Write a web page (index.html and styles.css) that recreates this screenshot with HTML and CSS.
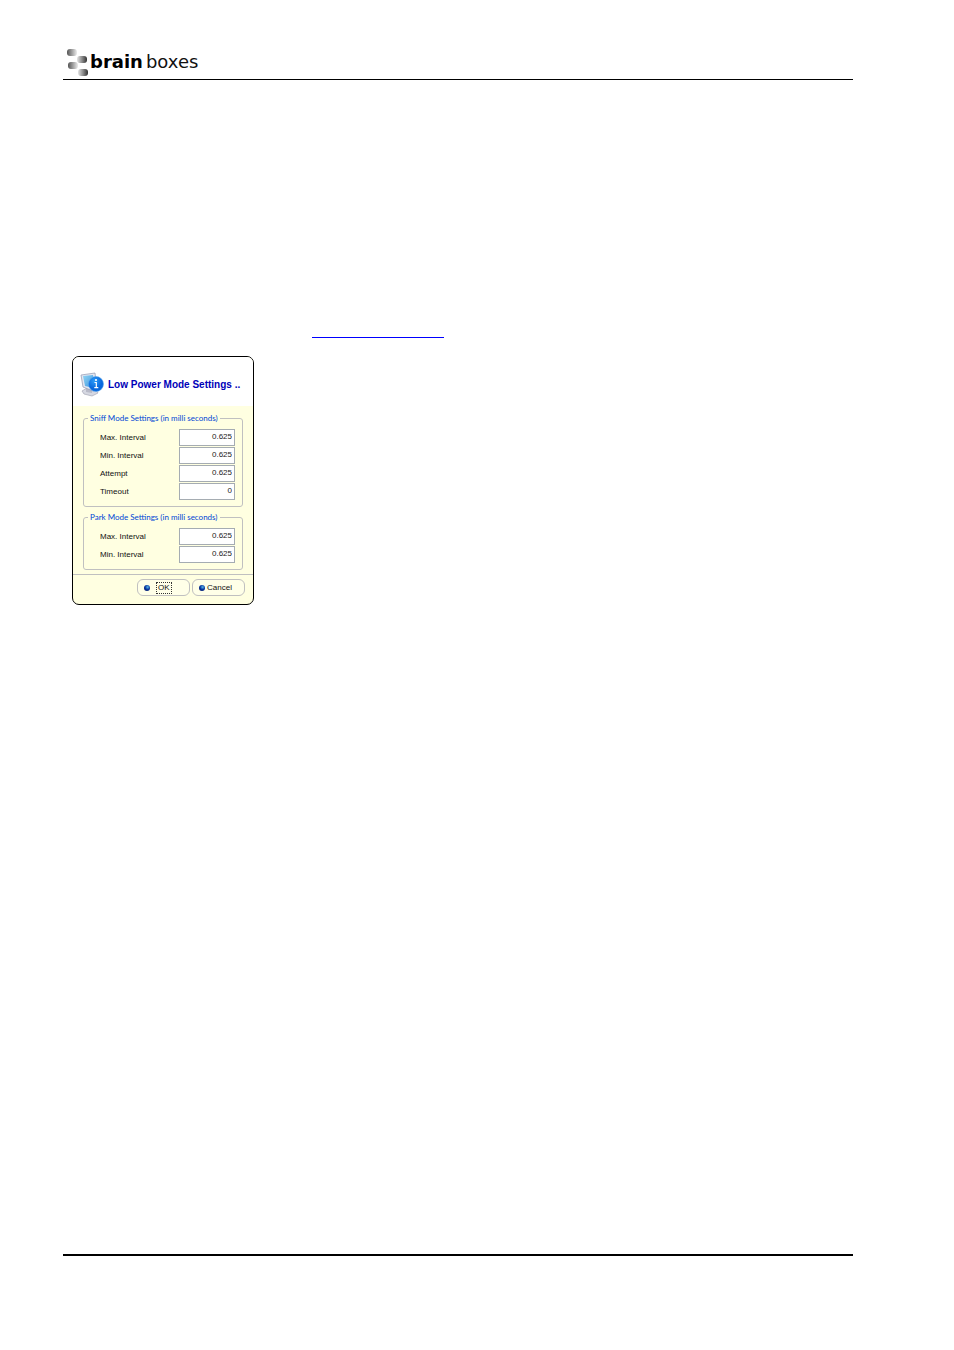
FILE: index.html
```
<!DOCTYPE html>
<html lang="en">
<head>
    <meta charset="UTF-8">
    <meta name="viewport" content="width=device-width, initial-scale=1.0">
    <title>Low Power Mode Settings</title>
    <link rel="stylesheet" href="styles.css">
</head>
<body>
    <div class="page">
        <header class="page-header">
            <svg class="logo-mark" viewBox="0 0 24 30" aria-hidden="true">
                <defs>
                    <linearGradient id="fadeRight">
                        <stop offset="0" stop-color="#555"/>
                        <stop offset="1" stop-color="#ececec"/>
                    </linearGradient>
                    <linearGradient id="fadeLeft">
                        <stop offset="0" stop-color="#e4e4e4"/>
                        <stop offset="1" stop-color="#333"/>
                    </linearGradient>
                </defs>
                <rect x="2" y="2" width="10" height="7" rx="3" fill="url(#fadeRight)"/>
                <rect x="12" y="9" width="10" height="7" rx="3" fill="url(#fadeLeft)"/>
                <rect x="3" y="15" width="10" height="7" rx="3" fill="url(#fadeRight)"/>
                <rect x="13" y="22" width="10" height="7" rx="3" fill="url(#fadeLeft)"/>
            </svg>
            <span class="logo-text"><b>brain</b>boxes</span>
        </header>
        <main>
            <div class="link-line"></div>
            <form class="dialog">
                <div class="dialog-header">
                    <svg class="dialog-icon" viewBox="0 0 24 26" aria-hidden="true">
                        <defs>
                            <linearGradient id="screen" x2="1" y2="1">
                                <stop offset="0" stop-color="#8fd4f4"/>
                                <stop offset="1" stop-color="#3c94dc"/>
                            </linearGradient>
                            <radialGradient id="ball" cx=".4" cy=".3">
                                <stop offset="0" stop-color="#2c9cf8"/>
                                <stop offset="1" stop-color="#0867dc"/>
                            </radialGradient>
                        </defs>
                        <path d="M2 19l5-3 9 2 2 3-6 3-8-2z" fill="#d6d8e2" stroke="#a6a8b6" stroke-width=".7"/>
                        <path d="M6 16l6 1v4l-6-1z" fill="#b8bac8"/>
                        <path d="M1 3l14-2 2 16-4 2L3 15z" fill="#e4e6f0" stroke="#8f98b0" stroke-width=".7"/>
                        <path d="M3 4l10-1 1 13-9-2z" fill="url(#screen)"/>
                        <circle cx="16" cy="12" r="7.5" fill="url(#ball)" stroke="#5ba7ee" stroke-width=".6"/>
                        <circle cx="16" cy="8" r="1.1" fill="#fff"/>
                        <path d="M14.5 10.5h1.8v5M14.3 15.7h4" stroke="#fff" stroke-width="1.2" fill="none"/>
                    </svg>
                    <h1>Low Power Mode Settings ..</h1>
                </div>
                <div class="dialog-body">
                    <fieldset>
                        <legend>Sniff Mode Settings (in milli seconds)</legend>
                        <div class="row">
                            <label for="sniffMax">Max. Interval</label>
                            <input type="text" id="sniffMax" value="0.625">
                        </div>
                        <div class="row">
                            <label for="sniffMin">Min. Interval</label>
                            <input type="text" id="sniffMin" value="0.625">
                        </div>
                        <div class="row">
                            <label for="attempt">Attempt</label>
                            <input type="text" id="attempt" value="0.625">
                        </div>
                        <div class="row">
                            <label for="timeout">Timeout</label>
                            <input type="text" id="timeout" value="0">
                        </div>
                    </fieldset>
                    <fieldset>
                        <legend>Park Mode Settings (in milli seconds)</legend>
                        <div class="row">
                            <label for="parkMax">Max. Interval</label>
                            <input type="text" id="parkMax" value="0.625">
                        </div>
                        <div class="row">
                            <label for="parkMin">Min. Interval</label>
                            <input type="text" id="parkMin" value="0.625">
                        </div>
                    </fieldset>
                </div>
                <div class="dialog-buttons">
                    <button type="submit" class="ok"><span class="dot"></span><span class="focus">OK</span></button>
                    <button type="button"><span class="dot"></span>Cancel</button>
                </div>
            </form>
        </main>
        <footer class="page-footer"></footer>
    </div>
</body>
</html>
```
FILE: styles.css
```
* {
    box-sizing: border-box;
}
body {
    margin: 0;
    background-color: #fff;
    font-family: "Liberation Sans", Arial, sans-serif;
}
.page {
    display: flex;
    flex-direction: column;
    min-height: 100vh;
    padding: 46px 101px 94px 63px;
}
.page-header {
    display: flex;
    align-items: center;
    gap: 1px;
    height: 34px;
    padding: 0 2px 2px;
    border-bottom: 1px solid #000;
}
.logo-mark {
    width: 24px;
    height: 30px;
}
.logo-text {
    font-family: "DejaVu Sans", Verdana, sans-serif;
    font-size: 18px;
    line-height: 20px;
    color: #111;
}
.logo-text b {
    margin-right: 3px;
    color: #000;
}
main {
    flex: 1;
    padding: 257px 9px 0;
}
.link-line {
    width: 132px;
    margin: 0 0 18px 240px;
    border-bottom: 1px solid #00f;
}
.dialog {
    width: 182px;
    border: 1px solid #000;
    border-radius: 7px;
    background-color: #ffffe1;
    overflow: hidden;
    font-size: 8px;
    line-height: 10px;
    color: #111;
}
.dialog-header {
    display: flex;
    align-items: center;
    gap: 4px;
    height: 49px;
    padding: 6px 8px 0 7px;
    background-color: #fff;
}
.dialog-icon {
    flex: none;
    width: 24px;
    height: 26px;
}
h1 {
    margin: 0;
    font-size: 10px;
    line-height: 12px;
    white-space: nowrap;
    color: #0000b8;
}
.dialog-body {
    display: flex;
    flex-direction: column;
    gap: 5px;
    padding: 7px 10px 4px;
}
fieldset {
    display: flex;
    flex-direction: column;
    gap: 1px;
    min-width: 0;
    margin: 0;
    padding: 6px 7px 6px 16px;
    border: 1px solid #c0c0c0;
    border-radius: 3px;
}
legend {
    margin-left: -12px;
    padding: 0 2px;
    font-family: Lato, "Liberation Sans", sans-serif;
    white-space: nowrap;
    color: #0046d5;
}
.row {
    display: flex;
    justify-content: space-between;
    align-items: center;
}
input {
    width: 56px;
    height: 17px;
    padding: 0 2px 2px;
    border: 1px solid #a5acb2;
    background-color: #fff;
    font: inherit;
    text-align: right;
    color: #222;
}
.dialog-buttons {
    display: flex;
    justify-content: flex-end;
    gap: 2px;
    padding: 4px 8px 8px;
    border-top: 1px solid #c0c0c0;
}
button {
    display: flex;
    align-items: center;
    gap: 2px;
    width: 53px;
    height: 17px;
    padding: 0 6px;
    border: 1px solid #c0c0c0;
    border-radius: 6px;
    background-color: #ffffe8;
    font: inherit;
    color: #111;
}
.ok {
    gap: 6px;
}
.dot {
    width: 6px;
    height: 6px;
    border-radius: 50%;
    background: radial-gradient(circle at 60% 35%, #58b8e8, #0838a0 45%, #000850);
}
.focus {
    padding: 0 1px;
    border: 1px dotted #333;
}
.page-footer {
    border-top: 2px solid #000;
}
```
